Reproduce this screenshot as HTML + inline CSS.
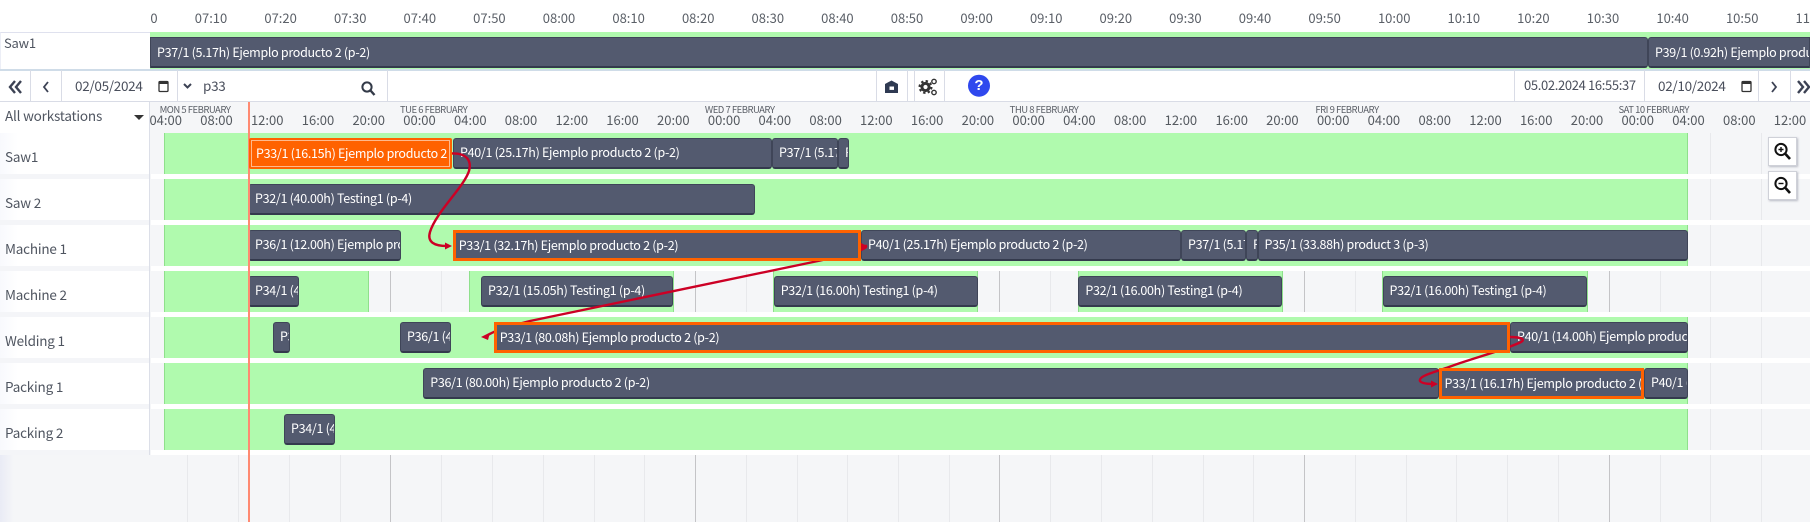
<!DOCTYPE html>
<html><head><meta charset="utf-8"><style>
html,body{margin:0;padding:0;width:1810px;height:522px;overflow:hidden;background:#f5f6f8}
body{position:relative;font-family:"Noto Sans CJK JP","Liberation Sans",sans-serif;color:#4a4f5c}
div,span{position:absolute;box-sizing:border-box}
.c{white-space:nowrap;transform:translateX(-50%);line-height:16px}
.tt{top:10px;font-size:13px;color:#5b6068}
.h{top:112px;font-size:13px;color:#555a60}
.d{top:101px;font-size:9.5px;letter-spacing:-.5px;color:#5c6068}
.g{top:133px;height:389px;width:1px;background:#e8e9ec}
.gd{top:133px;height:389px;width:1px;background:#c4c4c7}
.w{left:151px;width:1659px;height:5px;background:#fff;z-index:1}
.r{height:41px;background:#b0faae;z-index:1}
.rb{border-left:1.5px solid #8fe08c}
.re{border-right:1.5px solid #8fe08c}
.l{left:5px;font-size:13.5px;letter-spacing:-.2px;color:#4f5560;line-height:18px;z-index:2;white-space:nowrap}
.lb{left:0;width:149px;height:41px;background:linear-gradient(90deg,#f8f9fd,#fff 12%);z-index:1}
.b{height:31px;background:#535a6f;border:1px solid #3f4558;border-bottom:2px solid #343a4d;border-radius:3px;color:#fff;font-size:12.5px;letter-spacing:-.3px;line-height:26px;padding-left:6px;white-space:nowrap;overflow:hidden;z-index:3}
.o{background:#535a6f;border:3px solid #ff6200;border-radius:0;line-height:23px;padding-left:3px;z-index:7}
.s{top:70px;height:32px;width:1px;background:#d9dce6;z-index:2}
.t{font-size:13.5px;letter-spacing:-.3px;color:#4a4f5c;line-height:18px;white-space:nowrap;z-index:2}
svg{position:absolute;overflow:visible}
.z{left:1768px;width:29px;height:29px;background:#fff;border:1px solid #cfd1d8;box-shadow:1px 1px 2px #b8bac4;z-index:8}
</style></head><body>

<div style="left:0;top:0;width:1810px;height:32px;background:#fff"></div>
<div style="left:150px;top:0;width:1660px;height:32px;overflow:hidden">
<span class="c tt" style="left:-8.6px">07:00</span><span class="c tt" style="left:61px">07:10</span><span class="c tt" style="left:130.6px">07:20</span><span class="c tt" style="left:200.2px">07:30</span><span class="c tt" style="left:269.8px">07:40</span><span class="c tt" style="left:339.4px">07:50</span><span class="c tt" style="left:409px">08:00</span><span class="c tt" style="left:478.6px">08:10</span><span class="c tt" style="left:548.2px">08:20</span><span class="c tt" style="left:617.8px">08:30</span><span class="c tt" style="left:687.4px">08:40</span><span class="c tt" style="left:757px">08:50</span><span class="c tt" style="left:826.6px">09:00</span><span class="c tt" style="left:896.2px">09:10</span><span class="c tt" style="left:965.8px">09:20</span><span class="c tt" style="left:1035.4px">09:30</span><span class="c tt" style="left:1105px">09:40</span><span class="c tt" style="left:1174.6px">09:50</span><span class="c tt" style="left:1244.2px">10:00</span><span class="c tt" style="left:1313.8px">10:10</span><span class="c tt" style="left:1383.4px">10:20</span><span class="c tt" style="left:1453px">10:30</span><span class="c tt" style="left:1522.6px">10:40</span><span class="c tt" style="left:1592.2px">10:50</span><span class="c tt" style="left:1661.8px">11:00</span>
</div>

<!-- top row -->
<div style="left:0;top:32px;width:151px;height:39px;background:#fff;border:1px solid #dfe1ee;border-left-color:#eceef6"></div>
<div class="l" style="left:4px;top:34px;font-size:13px">Saw1</div>
<div style="left:150px;top:32px;width:1660px;height:37px;background:#b0faae"></div>
<div style="left:0;top:69px;width:1810px;height:1.5px;background:#cfdce8"></div>
<div class="b" style="left:150px;top:37px;width:1498px;border-radius:0 3px 3px 0;line-height:28px">P37/1 (5.17h) Ejemplo producto 2 (p-2)</div>
<div class="b" style="left:1648px;top:37px;width:162px;border-radius:3px 0 0 3px;line-height:28px">P39/1 (0.92h) Ejemplo producto 2 (p-2)</div>

<!-- toolbar -->
<div style="left:0;top:70.5px;width:1810px;height:31.5px;background:#fff;border-bottom:1px solid #d9dce6"></div>
<div class="s" style="left:30px"></div><div class="s" style="left:61px"></div><div class="s" style="left:176.5px"></div><div class="s" style="left:387px"></div><div class="s" style="left:876px"></div><div class="s" style="left:907px"></div><div class="s" style="left:914px"></div><div class="s" style="left:944px"></div><div class="s" style="left:1514px"></div><div class="s" style="left:1643.5px"></div><div class="s" style="left:1758px"></div><div class="s" style="left:1789.5px"></div>

<svg style="left:0;top:70px;z-index:3" width="1810" height="32" fill="none">
<path d="M15 11L10 17L15 23M21 11L16 17L21 23" stroke="#3c4254" stroke-width="2.4"/>
<path d="M48 12L44 17L48 22" stroke="#3c4254" stroke-width="1.8"/>
<rect x="159" y="11.5" width="9" height="10" rx="1" stroke="#333" stroke-width="1.3"/><rect x="159" y="11" width="9" height="3" fill="#333"/>
<path d="M184 14L187.5 17.5L191 14" stroke="#3c4254" stroke-width="2"/>
<circle cx="367" cy="17" r="4.6" stroke="#333a48" stroke-width="2"/><path d="M370.5 20.5L374.5 25" stroke="#333a48" stroke-width="2.4"/>
<path d="M885 23V14L891.5 10.5L898 14V23Z" fill="#2f3a52"/><rect x="889.5" y="16.5" width="4.5" height="3.4" fill="#fff"/>
<circle cx="925.5" cy="17" r="3.6" stroke="#333" stroke-width="3"/><circle cx="925.5" cy="17" r="6" stroke="#333" stroke-width="2" stroke-dasharray="2.4 2.3"/>
<circle cx="934" cy="11.5" r="2.2" stroke="#333" stroke-width="1.4"/><circle cx="934" cy="22.5" r="2.2" stroke="#333" stroke-width="1.4"/>
<rect x="1742" y="11.5" width="9" height="10" rx="1" stroke="#333" stroke-width="1.3"/><rect x="1742" y="11" width="9" height="3" fill="#333"/>
<path d="M1772 12L1776 17L1772 22" stroke="#3c4254" stroke-width="1.8"/>
<path d="M1798 11L1803 17L1798 23M1804 11L1809 17L1804 23" stroke="#3c4254" stroke-width="2.4"/>
<circle cx="979" cy="15.7" r="11" fill="#2f48ee"/>
</svg>
<div style="left:969px;top:75px;width:20px;height:22px;line-height:22px;text-align:center;color:#fff;font-weight:700;font-size:15px;font-family:'Liberation Sans',sans-serif;z-index:4">?</div>
<div class="t" style="left:75px;top:76px">02/05/2024</div>
<div class="t" style="left:203px;top:76px">p33</div>
<div class="t" style="left:1524px;top:76px;font-size:13px;letter-spacing:-.35px">05.02.2024 16:55:37</div>
<div class="t" style="left:1658px;top:76px">02/10/2024</div>

<!-- header -->
<div style="left:0;top:102px;width:150px;height:31.5px;background:#fff;border-bottom:1.5px solid #dcdfe8;border-right:1px solid #dcdfe8"></div>
<div class="l" style="left:5px;top:106px">All workstations</div>
<svg style="left:134px;top:115px" width="10" height="6"><path d="M0 0H10L5 5Z" fill="#333"/></svg>
<div style="left:150px;top:102px;width:1660px;height:31px;background:#f5f6f8"></div>
<div class="c d" style="left:195px">MON 5 FEBRUARY</div><div class="c d" style="left:433.6px">TUE 6 FEBRUARY</div><div class="c d" style="left:739.7px">WED 7 FEBRUARY</div><div class="c d" style="left:1044px">THU 8 FEBRUARY</div><div class="c d" style="left:1347px">FRI 9 FEBRUARY</div><div class="c d" style="left:1653.7px">SAT 10 FEBRUARY</div>
<span class="c h" style="left:165.7px">04:00</span><span class="c h" style="left:216.5px">08:00</span><span class="c h" style="left:267.2px">12:00</span><span class="c h" style="left:318px">16:00</span><span class="c h" style="left:368.7px">20:00</span><span class="c h" style="left:419.5px">00:00</span><span class="c h" style="left:470.3px">04:00</span><span class="c h" style="left:521px">08:00</span><span class="c h" style="left:571.8px">12:00</span><span class="c h" style="left:622.5px">16:00</span><span class="c h" style="left:673.3px">20:00</span><span class="c h" style="left:724.1px">00:00</span><span class="c h" style="left:774.8px">04:00</span><span class="c h" style="left:825.6px">08:00</span><span class="c h" style="left:876.3px">12:00</span><span class="c h" style="left:927.1px">16:00</span><span class="c h" style="left:977.9px">20:00</span><span class="c h" style="left:1028.6px">00:00</span><span class="c h" style="left:1079.4px">04:00</span><span class="c h" style="left:1130.1px">08:00</span><span class="c h" style="left:1180.9px">12:00</span><span class="c h" style="left:1231.7px">16:00</span><span class="c h" style="left:1282.4px">20:00</span><span class="c h" style="left:1333.2px">00:00</span><span class="c h" style="left:1383.9px">04:00</span><span class="c h" style="left:1434.7px">08:00</span><span class="c h" style="left:1485.5px">12:00</span><span class="c h" style="left:1536.2px">16:00</span><span class="c h" style="left:1587px">20:00</span><span class="c h" style="left:1637.7px">00:00</span><span class="c h" style="left:1688.5px">04:00</span><span class="c h" style="left:1739.3px">08:00</span><span class="c h" style="left:1790px">12:00</span>

<!-- grid lines -->
<div class="g" style="left:187px"></div><div class="g" style="left:238px"></div><div class="g" style="left:289px"></div><div class="g" style="left:340px"></div><div class="gd" style="left:390px"></div><div class="g" style="left:441px"></div><div class="g" style="left:492px"></div><div class="g" style="left:543px"></div><div class="g" style="left:594px"></div><div class="g" style="left:644px"></div><div class="gd" style="left:695px"></div><div class="g" style="left:746px"></div><div class="g" style="left:797px"></div><div class="g" style="left:847px"></div><div class="g" style="left:898px"></div><div class="g" style="left:949px"></div><div class="gd" style="left:999px"></div><div class="g" style="left:1050px"></div><div class="g" style="left:1101px"></div><div class="g" style="left:1152px"></div><div class="g" style="left:1203px"></div><div class="g" style="left:1253px"></div><div class="gd" style="left:1304px"></div><div class="g" style="left:1355px"></div><div class="g" style="left:1406px"></div><div class="g" style="left:1456px"></div><div class="g" style="left:1507px"></div><div class="g" style="left:1558px"></div><div class="gd" style="left:1609px"></div><div class="g" style="left:1660px"></div><div class="g" style="left:1710px"></div><div class="g" style="left:1761px"></div>

<!-- left column -->
<div style="left:0;top:133px;width:150px;height:322px;background:#f4f5f8;border-right:1.5px solid #dcdfe8;z-index:1"></div>
<div class="lb" style="top:133px"></div><div class="lb" style="top:179px"></div><div class="lb" style="top:225px"></div><div class="lb" style="top:271px"></div><div class="lb" style="top:317px"></div><div class="lb" style="top:363px"></div><div class="lb" style="top:409px"></div>
<div class="l" style="top:147px">Saw1</div><div class="l" style="top:193px">Saw 2</div><div class="l" style="top:239px">Machine 1</div><div class="l" style="top:285px">Machine 2</div><div class="l" style="top:331px">Welding 1</div><div class="l" style="top:377px">Packing 1</div><div class="l" style="top:423px">Packing 2</div>
<div style="left:0;top:455px;width:14px;height:67px;background:linear-gradient(90deg,#e9ebf5,#f5f6f8)"></div>

<!-- row greens -->
<div class="w" style="top:174px"></div><div class="w" style="top:220px"></div><div class="w" style="top:266px"></div><div class="w" style="top:312px"></div><div class="w" style="top:358px"></div><div class="w" style="top:404px"></div><div class="w" style="top:450px"></div>
<div class="r rb re" style="left:164px;top:133px;width:1523.5px"></div>
<div class="r rb re" style="left:164px;top:179px;width:1523.5px"></div>
<div class="r rb re" style="left:164px;top:225px;width:1523.5px"></div>
<div class="r rb re" style="left:164px;top:271px;width:204.5px"></div>
<div class="r rb re" style="left:469px;top:271px;width:204.5px"></div>
<div class="r rb re" style="left:773px;top:271px;width:205px"></div>
<div class="r rb re" style="left:1077.5px;top:271px;width:205px"></div>
<div class="r rb re" style="left:1382px;top:271px;width:205.5px"></div>
<div class="r rb re" style="left:164px;top:317px;width:1523.5px"></div>
<div class="r rb re" style="left:164px;top:363px;width:1523.5px"></div>
<div class="r rb re" style="left:164px;top:409px;width:1523.5px"></div>

<!-- now line -->
<div style="left:247.5px;top:102px;width:2px;height:420px;background:#ff8a72;z-index:4"></div>

<!-- bars -->
<div class="b" style="left:249px;top:138px;width:203px;background:#ff6200;border:2px solid #ff6200;box-shadow:inset 0 0 0 1px #ffb98c;border-radius:2px;line-height:25px;padding-left:5px;z-index:7">P33/1 (16.15h) Ejemplo producto 2 (p-2)</div>
<div class="b" style="left:453px;top:138px;width:319px">P40/1 (25.17h) Ejemplo producto 2 (p-2)</div>
<div class="b" style="left:772px;top:138px;width:66px">P37/1 (5.17h) Ejemplo</div>
<div class="b" style="left:838px;top:138px;width:11px">P38</div>

<div class="b" style="left:248px;top:184px;width:507px">P32/1 (40.00h) Testing1 (p-4)</div>

<div class="b" style="left:248px;top:230px;width:152.5px">P36/1 (12.00h) Ejemplo producto 2</div>
<div class="b o" style="left:452.7px;top:230px;width:408px">P33/1 (32.17h) Ejemplo producto 2 (p-2)</div>
<div class="b" style="left:861px;top:230px;width:320px">P40/1 (25.17h) Ejemplo producto 2 (p-2)</div>
<div class="b" style="left:1181px;top:230px;width:65px">P37/1 (5.17h) Ejemplo</div>
<div class="b" style="left:1246px;top:230px;width:11.5px">P38</div>
<div class="b" style="left:1257.5px;top:230px;width:430.5px">P35/1 (33.88h) product 3 (p-3)</div>

<div class="b" style="left:248px;top:276px;width:50.5px">P34/1 (40.00h)</div>
<div class="b" style="left:481px;top:276px;width:192px">P32/1 (15.05h) Testing1 (p-4)</div>
<div class="b" style="left:773.7px;top:276px;width:204px">P32/1 (16.00h) Testing1 (p-4)</div>
<div class="b" style="left:1078.4px;top:276px;width:203.5px">P32/1 (16.00h) Testing1 (p-4)</div>
<div class="b" style="left:1382.5px;top:276px;width:204.5px">P32/1 (16.00h) Testing1 (p-4)</div>

<div class="b" style="left:273px;top:322px;width:17px">P34/1</div>
<div class="b" style="left:400px;top:322px;width:51px">P36/1 (40.00h)</div>
<div class="b o" style="left:493.7px;top:322px;width:1016px">P33/1 (80.08h) Ejemplo producto 2 (p-2)</div>
<div class="b" style="left:1510px;top:322px;width:177.5px">P40/1 (14.00h) Ejemplo producto 2 (p-2)</div>

<div class="b" style="left:423.3px;top:368px;width:1015.5px">P36/1 (80.00h) Ejemplo producto 2 (p-2)</div>
<div class="b o" style="left:1438.5px;top:368px;width:205.5px">P33/1 (16.17h) Ejemplo producto 2 (p-2)</div>
<div class="b" style="left:1644px;top:368px;width:43.5px">P40/1 (14.00h)</div>

<div class="b" style="left:284px;top:414px;width:50.5px">P34/1 (40.00h)</div>

<!-- arrows -->
<svg style="left:0;top:0;z-index:5" width="1810" height="522" fill="none">
<g stroke="#cc0025" stroke-width="2.4">
<path d="M452 153.5C466 153 472 160 469 171C464 187 436 212 430 232C427 242 434 246 447 246"/>
<path d="M861 246H866C868 250 840 256 818 261L530 321C510 326 498 329 488 335"/>
<path d="M1510 337C1520 337 1526 339 1521 342C1505 350 1470 359 1449 367C1435 372 1418 376 1420 381C1422 384 1430 384 1433 384"/>
</g>
<g fill="#cc0025">
<path d="M452 246L445 242.5V249.5Z"/>
<path d="M861 243L867 246L861 249Z"/>
<path d="M481 337L490 332.5L488 340Z"/>
<path d="M1438 384L1431 380.5V387.5Z"/>
</g>
</svg>

<!-- zoom buttons -->
<div class="z" style="top:137px"><svg width="27" height="27" fill="none" style="left:0;top:0"><circle cx="12" cy="11.5" r="5.6" stroke="#111" stroke-width="2"/><path d="M16.5 16L21 21" stroke="#111" stroke-width="2.6"/><path d="M9.5 11.5H14.5M12 9V14" stroke="#111" stroke-width="1.4"/></svg></div>
<div class="z" style="top:171px"><svg width="27" height="27" fill="none" style="left:0;top:0"><circle cx="12" cy="11.5" r="5.6" stroke="#111" stroke-width="2"/><path d="M16.5 16L21 21" stroke="#111" stroke-width="2.6"/><path d="M9.5 11.5H14.5" stroke="#111" stroke-width="1.4"/></svg></div>

</body></html>
